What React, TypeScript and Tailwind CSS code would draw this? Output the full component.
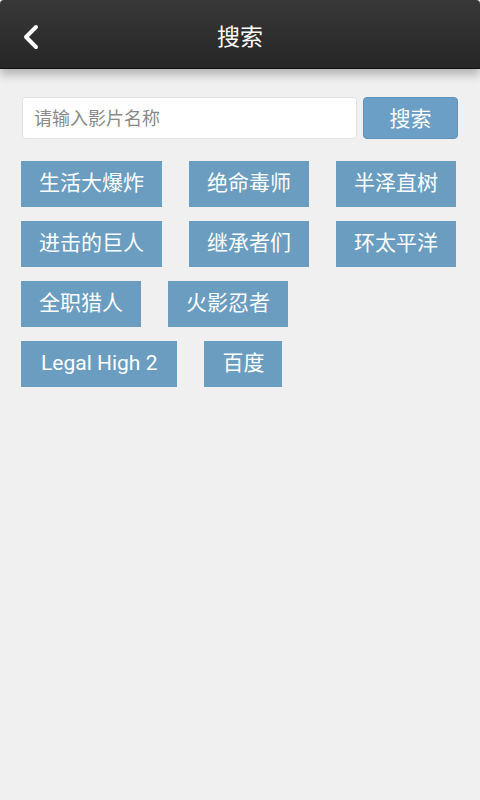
import React from "react";

const tags: string[][] = [
  ["生活大爆炸", "绝命毒师", "半泽直树"],
  ["进击的巨人", "继承者们", "环太平洋"],
  ["全职猎人", "火影忍者"],
  ["Legal High 2", "百度"],
];

export default function App() {
  return (
    <div
      className="w-[480px] h-[800px] bg-[#f0f0f0] flex flex-col overflow-hidden"
      style={{ fontFamily: 'Roboto, "Noto Sans CJK SC", sans-serif' }}
    >
      <div className="relative h-[69px] shrink-0 rounded-t-[4px] bg-gradient-to-b from-[#383838] to-[#262626] border-b border-[#111] flex items-center justify-center pt-[6px] shadow-[0_6px_10px_rgba(0,0,0,0.25)] z-10">
        <svg
          className="absolute left-[20px] top-[23px]"
          width="22"
          height="28"
          viewBox="0 0 22 28"
          fill="none"
        >
          <path
            d="M16 4 L6 14 L16 24"
            stroke="white"
            strokeWidth="4"
            strokeLinecap="round"
            strokeLinejoin="round"
          />
        </svg>
        <span className="text-white text-[23px] leading-none">搜索</span>
      </div>

      <div className="flex gap-[6px] px-[22px] pt-[28px] pr-[22px]">
        <div className="w-[335px] h-[42px] bg-white border border-[#e2e2e2] rounded-[3px] flex items-center pl-[11px]">
          <span className="text-[#8a8a8a] text-[18px]">请输入影片名称</span>
        </div>
        <div className="w-[95px] h-[42px] bg-[#6b9fc6] border border-[#5f93bb] rounded-[4px] flex items-center justify-center pt-[3px]">
          <span className="text-white text-[21px]">搜索</span>
        </div>
      </div>

      <div className="flex flex-col gap-[14px] pl-[21px] pt-[22px]">
        {tags.map((row, i) => (
          <div key={i} className="flex gap-[27px]">
            {row.map((t) => (
              <div
                key={t}
                className={
                  t === "Legal High 2"
                    ? "h-[46px] px-[20px] bg-[#6a9dc0] flex items-center justify-center text-white text-[21px]"
                    : "h-[46px] px-[18px] bg-[#6a9dc0] flex items-center justify-center text-white text-[21px]"
                }
              >
                {t}
              </div>
            ))}
          </div>
        ))}
      </div>
    </div>
  );
}
